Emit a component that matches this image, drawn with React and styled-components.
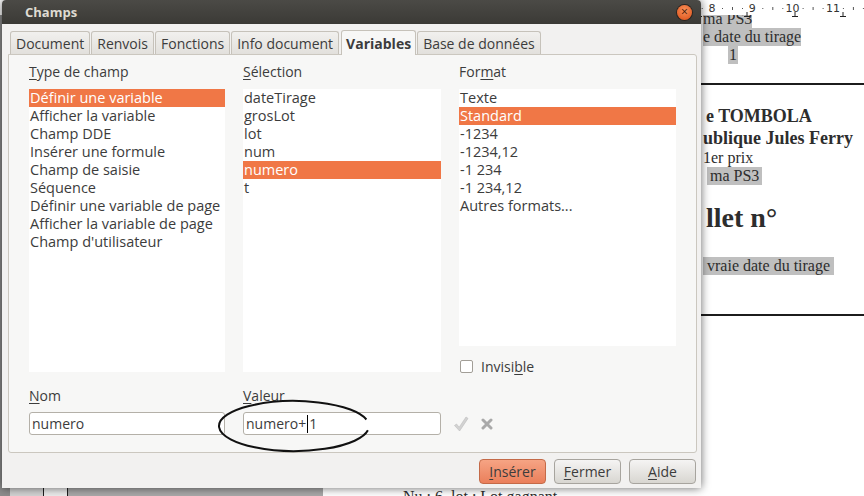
import React from 'react';
import styled, { createGlobalStyle } from 'styled-components';

const GlobalStyle = createGlobalStyle`
  html, body { margin:0; padding:0; }
  body {
    width:864px; height:496px; overflow:hidden;
    font-family:"Open Sans", "DejaVu Sans", sans-serif;
  }
`;

const fieldTypes = [
  'Définir une variable',
  'Afficher la variable',
  'Champ DDE',
  'Insérer une formule',
  'Champ de saisie',
  'Séquence',
  'Définir une variable de page',
  'Afficher la variable de page',
  "Champ d'utilisateur",
];
const variables = ['dateTirage', 'grosLot', 'lot', 'num', 'numero', 't'];
const formats = ['Texte', 'Standard', '-1234', '-1234,12', '-1 234', '-1 234,12', 'Autres formats...'];
const tabs = ['Document', 'Renvois', 'Fonctions', 'Info document', 'Variables', 'Base de données'];

/* ---------- writer document behind the dialog ---------- */

const Writer = styled.div`
  position:relative;
  width:864px;
  height:496px;
  overflow:hidden;
  display:flex;
  flex-direction:column;
  background:#fff;
`;

const Ruler = styled.div`
  height:15px;
  flex:none;
  background:#fff;
  position:relative;
  z-index:1;
`;

const Workspace = styled.div`
  flex:1;
  display:flex;
  min-height:0;
`;

const Gutter = styled.div`
  width:323px;
  flex:none;
  display:flex;
`;

const GutterPart = styled.div`
  width:${p => p.$w ? p.$w + 'px' : 'auto'};
  flex:${p => p.$w ? 'none' : 1};
  background:${p => p.$bg};
  border-right:${p => p.$line ? '1px solid #1e1e1e' : 'none'};
`;

const Page = styled.div`
  flex:1;
  background:#fff;
  overflow:hidden;
  display:flex;
  flex-direction:column;
  font-family:"Liberation Serif", "Times New Roman", serif;
  color:#2d2d2d;
`;

const DocLine = styled.div`
  padding-left:${p => 380 + (p.$indent || 0)}px;
  margin-top:${p => p.$top || 0}px;
  font-size:${p => p.$size || 16}px;
  font-weight:${p => p.$bold ? 700 : 400};
  line-height:${p => p.$lh || 18}px;
  white-space:nowrap;
`;

const Mark = styled.span`
  display:inline-block;
  height:18px;
  line-height:18px;
  background:#bfbfbf;
  padding:0 ${p => p.$pad || 0}px;
`;

const Rule = styled.div`
  height:2px;
  background:#1c1c1c;
  margin-top:${p => p.$top}px;
`;

const Footer = styled.div`
  margin-top:auto;
  margin-bottom:-10px;
  padding-left:80px;
  font-size:16px;
  line-height:18px;
  white-space:nowrap;
`;

/* ---------- dialog ---------- */

const Dialog = styled.div`
  position:absolute;
  left:2px;
  top:0;
  width:699px;
  height:488px;
  z-index:2;
  display:flex;
  flex-direction:column;
  background:#f2f1f0;
  border-radius:4px 4px 0 0;
  box-shadow:0 0 10px rgba(0,0,0,0.6);
  color:#3c3c3c;
  font-family:"Open Sans", "DejaVu Sans", sans-serif;
`;

const TitleBar = styled.div`
  height:24px;
  flex:none;
  display:flex;
  align-items:center;
  justify-content:space-between;
  padding:0 9px 0 23px;
  border-radius:4px 4px 0 0;
  background:linear-gradient(#4b4a46, #3b3a36);
  color:#dfdbd2;
  font-size:13px;
  font-weight:700;
`;

const CloseBtn = styled.div`
  width:15px;
  height:15px;
  border-radius:50%;
  background:radial-gradient(circle at 50% 35%, #f8915a, #dc4c14);
  box-shadow:0 0 0 1px #2c2520;
  display:flex;
  align-items:center;
  justify-content:center;
  color:#3e1605;
  font-size:12px;
  font-weight:400;
  line-height:1;
`;

const Body = styled.div`
  flex:1;
  display:flex;
  flex-direction:column;
  padding:6px 4px 0 6px;
`;

const TabBar = styled.div`
  height:25px;
  margin-bottom:-1px;
  display:flex;
  align-items:flex-start;
  gap:1px;
  padding-left:2px;
`;

const Tab = styled.div`
  box-sizing:border-box;
  height:${p => p.$active ? 25 : 23}px;
  margin:${p => p.$active ? '0 0 0 1px' : '1px 0 0 0'};
  padding:0 ${p => p.$active ? 4 : 5}px;
  display:flex;
  align-items:center;
  border:1px solid #c6c2ba;
  border-bottom:none;
  border-radius:3px 3px 0 0;
  background:${p => p.$active ? '#f7f7f6' : 'linear-gradient(#f1f0ee, #e2e0dc)'};
  font-size:14px;
  font-weight:${p => p.$active ? 700 : 400};
  position:relative;
  z-index:${p => p.$active ? 1 : 0};
`;

const Panel = styled.div`
  box-sizing:border-box;
  height:399px;
  border:1px solid #cbc7bf;
  border-radius:0 3px 3px 3px;
  background:#f7f7f6;
  padding:8px 20px 0 20px;
  display:flex;
  flex-direction:column;
`;

const Columns = styled.div`
  display:grid;
  grid-template-columns:196px 198px 217px;
  column-gap:18px;
`;

const Column = styled.div`
  display:flex;
  flex-direction:column;
`;

const Label = styled.div`
  height:18px;
  line-height:18px;
  font-size:14px;
  margin-bottom:${p => p.$gap ?? 8}px;
  white-space:nowrap;
  u { text-underline-offset:2px; }
`;

const ListBox = styled.div`
  height:${p => p.$h}px;
  background:#fff;
  overflow:hidden;
`;

const Item = styled.div`
  height:18px;
  line-height:18px;
  padding-left:1px;
  font-size:14.5px;
  white-space:nowrap;
  background:${p => p.$sel ? '#f07746' : 'transparent'};
  color:${p => p.$sel ? '#fff' : '#3c3c3c'};
`;

const CheckRow = styled.div`
  margin-top:14px;
  margin-left:1px;
  height:13px;
  display:flex;
  align-items:center;
  gap:8px;
  font-size:14px;
  u { text-underline-offset:2px; }
`;

const CheckBox = styled.span`
  box-sizing:border-box;
  width:13px;
  height:13px;
  border:1px solid #a29e97;
  border-radius:2px;
  background:#fff;
`;

const Fields = styled(Columns)`
  margin-top:14px;
  align-items:end;
`;

const Input = styled.div`
  box-sizing:border-box;
  height:23px;
  border:1px solid #b4b0a8;
  border-radius:3px;
  background:#fff;
  padding-left:2px;
  display:flex;
  align-items:center;
  font-size:14px;
  color:#3c3c3c;
`;

const Caret = styled.span`
  width:1px;
  height:18px;
  background:#000;
  margin:0 1px;
`;

const IconCell = styled.div`
  height:23px;
  margin-left:-6px;
  display:flex;
  align-items:center;
  gap:12px;
`;

const ButtonRow = styled.div`
  margin-top:6px;
  padding-right:1px;
  display:flex;
  justify-content:flex-end;
  gap:8px;
`;

const Button = styled.div`
  box-sizing:border-box;
  width:67px;
  height:25px;
  border:1px solid ${p => p.$primary ? '#c46a48' : '#a7a49e'};
  border-radius:4px;
  background:${p => p.$primary
    ? 'linear-gradient(#f6a484, #ea7f5b)'
    : 'linear-gradient(#f5f4f3, #d8d6d1)'};
  display:flex;
  align-items:center;
  justify-content:center;
  font-size:14px;
  color:#3c3c3c;
  u { text-underline-offset:2px; }
`;

const Annotation = styled.svg`
  position:absolute;
  left:216px;
  top:398px;
  z-index:3;
  overflow:visible;
  pointer-events:none;
`;

const RulerScale = () => {
  const nums = [6, 7, 8, 9, 10, 11, 12];
  const x = n => 712 + (n - 8) * 40.3;
  return (
    <svg width="864" height="15" viewBox="0 0 864 15">
      {nums.map(n => (
        <g key={n}>
          <text x={x(n)} y="10" fontSize="11" fontFamily="DejaVu Sans, sans-serif" fill="#333" textAnchor="middle">{n}</text>
          {[10, 20, 30].map(d => (
            <rect key={d} x={x(n) + d} y={d === 20 ? 5 : 6} width="1" height={d === 20 ? 3 : 1} fill="#555" />
          ))}
        </g>
      ))}
      {[651, 699, 747, 795, 843].map(t => (
        <path key={t} d={`M${t} 10 V14 M${t - 3} 14.5 H${t + 3}`} stroke="#222" strokeWidth="1" />
      ))}
    </svg>
  );
};

export default function App() {
  return (
    <>
      <GlobalStyle />
      <Writer>
        <Ruler>
          <RulerScale />
        </Ruler>
        <Workspace>
          <Gutter>
            <GutterPart $w={10} $bg="#8d8d8d" />
            <GutterPart $w={33} $bg="#d3d3d3" $line />
            <GutterPart $w={23} $bg="#ececec" $line />
            <GutterPart $bg="#a9a9a9" />
          </Gutter>
          <Page>
            <DocLine $top={-5}><Mark>ma PS3</Mark></DocLine>
            <DocLine><Mark>e date du tirage</Mark></DocLine>
            <DocLine $indent={25}><Mark $pad={1}>1</Mark></DocLine>
            <Rule $top={19} />
            <DocLine $top={20} $size={18} $bold $lh={22} $indent={3}>e TOMBOLA</DocLine>
            <DocLine $size={18} $bold $lh={22}>ublique Jules Ferry</DocLine>
            <DocLine>1er prix</DocLine>
            <DocLine $indent={4}><Mark $pad={3}>ma PS3</Mark></DocLine>
            <DocLine $top={17} $size={28} $bold $lh={32} $indent={3}>llet n°</DocLine>
            <DocLine $top={23}><Mark $pad={4}>vraie date du tirage</Mark></DocLine>
            <Rule $top={39} />
            <Footer>Nu : 6&nbsp; lot : Lot gagnant</Footer>
          </Page>
        </Workspace>

        <Dialog>
          <TitleBar>
            <span>Champs</span>
            <CloseBtn>×</CloseBtn>
          </TitleBar>
          <Body>
            <TabBar>
              {tabs.map(t => (
                <Tab key={t} $active={t === 'Variables'}>{t}</Tab>
              ))}
            </TabBar>
            <Panel>
              <Columns>
                <Column>
                  <Label><u>T</u>ype de champ</Label>
                  <ListBox $h={283}>
                    {fieldTypes.map((f, i) => <Item key={f} $sel={i === 0}>{f}</Item>)}
                  </ListBox>
                </Column>
                <Column>
                  <Label><u>S</u>élection</Label>
                  <ListBox $h={283}>
                    {variables.map(v => <Item key={v} $sel={v === 'numero'}>{v}</Item>)}
                  </ListBox>
                </Column>
                <Column>
                  <Label>For<u>m</u>at</Label>
                  <ListBox $h={257}>
                    {formats.map(f => <Item key={f} $sel={f === 'Standard'}>{f}</Item>)}
                  </ListBox>
                  <CheckRow>
                    <CheckBox />
                    <span>Invisi<u>b</u>le</span>
                  </CheckRow>
                </Column>
              </Columns>
              <Fields>
                <Column>
                  <Label $gap={7}><u>N</u>om</Label>
                  <Input>numero</Input>
                </Column>
                <Column>
                  <Label $gap={7}><u>V</u>aleur</Label>
                  <Input>numero+<Caret />1</Input>
                </Column>
                <IconCell>
                  <svg width="16" height="16" viewBox="0 0 16 16">
                    <path d="M1.5 9.5 L3.5 8 L6.2 11.2 L13 1 L15 2.4 L6.6 15 Z" fill="#d2d2d2" stroke="#bcbcbc" strokeWidth="0.6" strokeLinejoin="round" />
                  </svg>
                  <svg width="12" height="12" viewBox="0 0 12 12">
                    <path d="M2 2 L10 10 M10 2 L2 10" stroke="#a9a9a9" strokeWidth="3" strokeLinecap="round" />
                  </svg>
                </IconCell>
              </Fields>
            </Panel>
            <ButtonRow>
              <Button $primary><span><u>I</u>nsérer</span></Button>
              <Button><span><u>F</u>ermer</span></Button>
              <Button><span><u>A</u>ide</span></Button>
            </ButtonRow>
          </Body>
        </Dialog>

        <Annotation width="158" height="58" viewBox="0 0 158 58">
          <path d="M151.9 32.3 A75 25 0 1 1 150.4 21.5" fill="none" stroke="#111" strokeWidth="2" />
        </Annotation>
      </Writer>
    </>
  );
}
